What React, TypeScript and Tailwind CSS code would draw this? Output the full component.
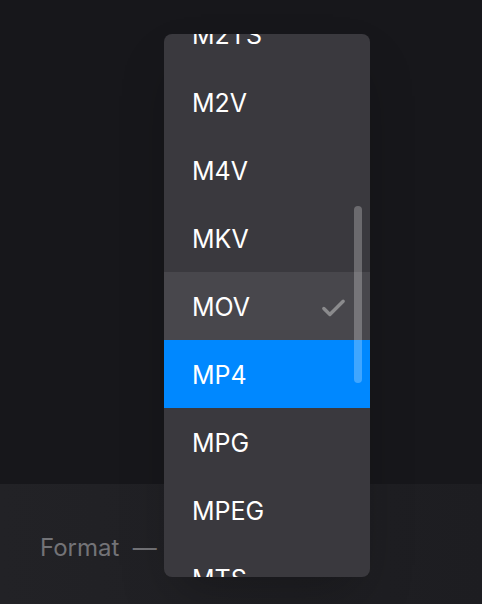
import { Check } from "lucide-react";

const formats = ["M2TS", "M2V", "M4V", "MKV", "MOV", "MP4", "MPG", "MPEG", "MTS"];

export default function App() {
  const selected = "MOV";
  const highlighted = "MP4";

  return (
    <div
      className="relative flex h-[604px] w-[482px] flex-col overflow-hidden bg-[#17171b]"
      style={{ fontFamily: "Inter, 'Noto Sans', sans-serif" }}
    >
      <div className="h-[484px]" />
      <div className="flex flex-1 items-center bg-gradient-to-r from-[#222226] to-[#1d1d21] px-10 pt-2">
        <span className="text-[24px] text-[#737377]">Format &nbsp;—</span>
      </div>

      {/* open menu */}
      <div className="absolute left-[164px] top-[34px] h-[543px] w-[206px] overflow-hidden rounded-lg bg-[#3a393e] shadow-2xl">
        <div className="-mt-[34px] flex flex-col">
          {formats.map((f) => (
            <div
              key={f}
              className={
                "flex h-[68px] items-center justify-between pl-7 pr-[22px] pt-1 text-[25px] text-white " +
                (f === highlighted ? "bg-[#0088ff]" : f === selected ? "bg-[#48474c]" : "")
              }
            >
              <span>{f}</span>
              {f === selected && (
                <Check className="h-[29px] w-[29px] text-[#8b8b8d]" strokeWidth={2.8} />
              )}
            </div>
          ))}
        </div>
        <div className="absolute left-[190px] top-[172px] h-[177px] w-2 rounded-full bg-white/25" />
      </div>
    </div>
  );
}
